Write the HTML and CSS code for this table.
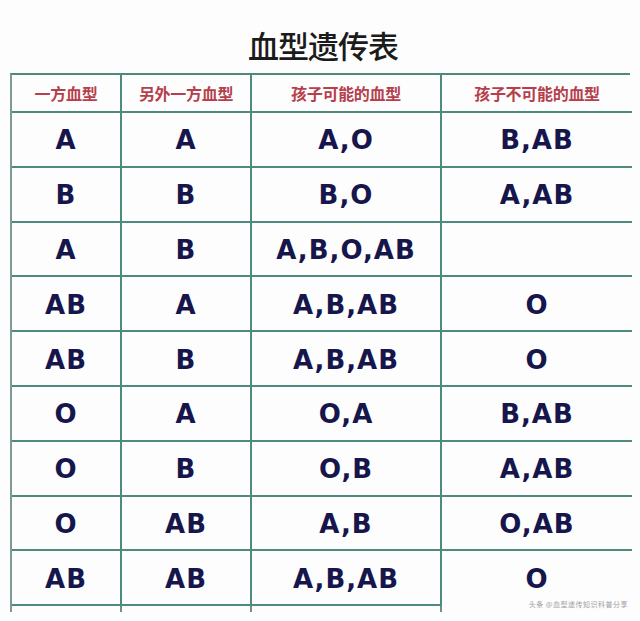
FILE: index.html
```html
<!DOCTYPE html>
<html lang="zh">
<head>
<meta charset="utf-8">
<title>血型遗传表</title>
<link rel="stylesheet" href="styles.css">
</head>
<body>
<div class="page">
  <h1 class="title">血型遗传表</h1>
  <div class="table">
    <div class="cell head">一方血型</div>
    <div class="cell head">另外一方血型</div>
    <div class="cell head">孩子可能的血型</div>
    <div class="cell head last">孩子不可能的血型</div>

    <div class="cell">A</div><div class="cell">A</div><div class="cell">A,O</div><div class="cell last">B,AB</div>
    <div class="cell">B</div><div class="cell">B</div><div class="cell">B,O</div><div class="cell last">A,AB</div>
    <div class="cell">A</div><div class="cell">B</div><div class="cell">A,B,O,AB</div><div class="cell last"></div>
    <div class="cell">AB</div><div class="cell">A</div><div class="cell">A,B,AB</div><div class="cell last">O</div>
    <div class="cell">AB</div><div class="cell">B</div><div class="cell">A,B,AB</div><div class="cell last">O</div>
    <div class="cell">O</div><div class="cell">A</div><div class="cell">O,A</div><div class="cell last">B,AB</div>
    <div class="cell">O</div><div class="cell">B</div><div class="cell">O,B</div><div class="cell last">A,AB</div>
    <div class="cell">O</div><div class="cell">AB</div><div class="cell">A,B</div><div class="cell last">O,AB</div>
    <div class="cell">AB</div><div class="cell">AB</div><div class="cell">A,B,AB</div><div class="cell last end">O</div>

    <div class="tail"></div><div class="tail"></div><div class="tail"></div><div class="tail none"></div>
    <div class="watermark">头条 @血型遗传知识科普分享</div>
  </div>
</div>
</body>
</html>
```

FILE: styles.css
```css
html, body {
  margin: 0;
  padding: 0;
  background: #fdfdfd;
}

.page {
  width: 640px;
  height: 621px;
  overflow: hidden;
}

.title {
  margin: 0;
  height: 73px;
  box-sizing: border-box;
  padding-top: 27px;
  text-align: center;
  font-family: "Noto Sans CJK SC", sans-serif;
  font-weight: 500;
  font-size: 31px;
  line-height: 36px;
  color: #1b1b1b;
  letter-spacing: -1px;
  padding-left: 6px;
}

.table {
  position: relative;
  margin-left: 10px;
  width: 620px;
  display: grid;
  grid-template-columns: 110px 130px 190px 190px;
  grid-template-rows: 38px repeat(9, 54.8px) 6px;
  border-top: 2px solid #4d8a7c;
  border-left: 2px solid #7e9a96;
  box-sizing: border-box;
}

.cell {
  box-sizing: border-box;
  border-right: 2px solid #4f8a7e;
  border-bottom: 2.5px solid #4f8a7e;
  display: flex;
  align-items: center;
  justify-content: center;
  font-family: "DejaVu Sans", sans-serif;
  font-weight: bold;
  font-size: 26px;
  letter-spacing: 1px;
  color: #16164c;
  padding-top: 2px;
}

.cell.last {
  border-right: none;
}

.cell.end {
  border-bottom-color: transparent;
}

.cell.head {
  font-family: "Noto Sans CJK SC", sans-serif;
  font-weight: 600;
  font-size: 16px;
  color: #b5404c;
  padding-top: 0;
  letter-spacing: -0.3px;
}

.tail {
  border-right: 2px solid #6f8f8a;
  box-sizing: border-box;
}

.tail.none {
  border-right: none;
}

.watermark {
  position: absolute;
  right: 2px;
  bottom: 4px;
  font-family: "Noto Sans CJK SC", sans-serif;
  font-size: 7px;
  line-height: 7px;
  color: #9aa0a4;
  letter-spacing: 0.5px;
}
```
